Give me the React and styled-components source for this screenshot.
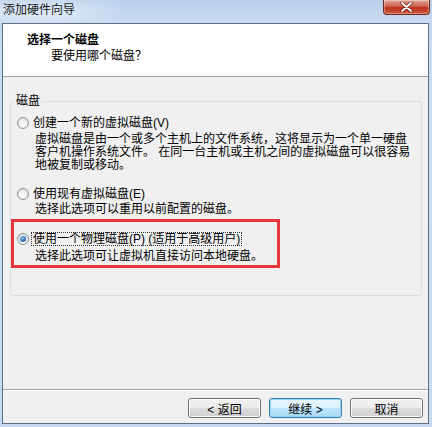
import React from "react";
import styled, { createGlobalStyle } from "styled-components";

const GlobalStyle = createGlobalStyle`
  body {
    margin: 0;
    background: #c8daef;
    font-family: "Liberation Sans", "Noto Sans CJK SC", sans-serif;
    font-size: 12px;
    color: #000;
  }
`;

const Window = styled.div`
  width: 432px;
  height: 427px;
  display: flex;
  flex-direction: column;
  background: linear-gradient(#bfd4ee, #cbdcf1 60px, #c6d9ef);
  overflow: hidden;
`;

const TitleBar = styled.div`
  height: 23px;
  display: flex;
  align-items: flex-start;
  padding-left: 3px;
  background: radial-gradient(ellipse 90px 18px at 40px 11px, rgba(255, 255, 255, 0.55), transparent),
    linear-gradient(#b9d0ec, #c9dbf1);
`;

const TitleText = styled.span`
  line-height: 21px;
  font-size: 12px;
  color: #1a1a1a;
`;

const CloseButton = styled.div`
  margin-left: auto;
  margin-right: 2px;
  width: 47px;
  height: 15px;
  box-sizing: border-box;
  border: 1px solid #6b2a22;
  border-top: none;
  border-radius: 0 0 4px 4px;
  background: linear-gradient(#e2a597, #cf5f4d 45%, #b9321f 55%, #d0583f);
  display: flex;
  align-items: center;
  justify-content: center;
  box-shadow: inset 0 0 0 1px rgba(255, 255, 255, 0.35);
`;

const ClientFrame = styled.div`
  flex: 1;
  margin: 0 3px 3px 2px;
  border: 1px solid #5e7089;
  background: #f0f0f0;
  display: flex;
  flex-direction: column;
`;

const Header = styled.div`
  height: 53px;
  box-sizing: border-box;
  background: #fff;
  border-bottom: 1px solid #a0a0a0;
  padding: 9px 0 0 24px;
`;

const HeaderTitle = styled.div`
  font-weight: bold;
  line-height: 14px;
`;

const HeaderSub = styled.div`
  font-family: "Noto Sans CJK SC", sans-serif;
  line-height: 14px;
  margin-left: 24px;
  margin-top: 1px;
`;

const Body = styled.div`
  flex: 1;
  padding-top: 18px;
`;

const Group = styled.fieldset`
  margin: 0 6px 0 7px;
  padding: 0 0 32px 6px;
  border: 1px solid #d5dfe5;
  border-radius: 3px;
  min-width: 0;
`;

const GroupLabel = styled.legend`
  margin-left: -3px;
  padding: 0 2px;
  line-height: 12px;
`;

const Option = styled.div`
  position: relative;
  margin-top: ${(p) => p.$top}px;

  ${(p) =>
    p.$marked &&
    `
    &::after {
      content: "";
      position: absolute;
      top: -13px;
      left: -6px;
      bottom: -5px;
      width: 269px;
      box-sizing: border-box;
      border: 3px solid #e4383c;
      pointer-events: none;
    }
  `}
`;

const OptionRow = styled.div`
  display: flex;
  align-items: center;
  height: 14px;
`;

const Radio = styled.span`
  width: 12px;
  height: 12px;
  box-sizing: border-box;
  border-radius: 50%;
  border: 1px solid #8d9499;
  background: radial-gradient(circle at 50% 60%, #f6f6f6 30%, #d9dbdd 80%);
  margin-right: 4px;
  display: flex;
  align-items: center;
  justify-content: center;
  flex-shrink: 0;
`;

const RadioDot = styled.span`
  width: 6px;
  height: 6px;
  border-radius: 50%;
  background: radial-gradient(circle at 40% 35%, #8fc7f3, #1f5f9e 70%);
`;

const OptionLabel = styled.span`
  line-height: 12px;
  padding: 0 1px;
  border: 1px dotted ${(p) => (p.$focused ? "#333" : "transparent")};
  margin-left: -2px;
  white-space: nowrap;
`;

const Description = styled.div`
  margin-left: 18px;
  margin-top: ${(p) => p.$gap}px;
  line-height: 13px;
  white-space: nowrap;
`;

const Footer = styled.div`
  border-top: 1px solid #a0a0a0;
  box-shadow: inset 0 1px 0 #fff;
  display: flex;
  justify-content: flex-end;
  gap: 8px;
  padding: 8px 5px 5px 0;
`;

const Button = styled.button`
  width: 73px;
  height: 20px;
  box-sizing: border-box;
  padding: 0;
  font-family: inherit;
  font-size: 12px;
  color: #000;
  border-radius: 3px;
  border: 1px solid ${(p) => (p.$primary ? "#3c7fb1" : "#707070")};
  background: ${(p) =>
    p.$primary
      ? "linear-gradient(#eaf6fd, #d9f0fc 50%, #bee6fd 50%, #a7d9f5)"
      : "linear-gradient(#f2f2f2, #ebebeb 50%, #dddddd 50%, #cfcfcf)"};
  box-shadow: inset 0 0 0 1px ${(p) => (p.$primary ? "#94d4f7" : "#fcfcfc")};
`;

const options = [
  {
    label: "创建一个新的虚拟磁盘(V)",
    top: 9,
    gap: 3,
    lines: [
      "虚拟磁盘是由一个或多个主机上的文件系统，这将显示为一个单一硬盘",
      "客户机操作系统文件。 在同一台主机或主机之间的虚拟磁盘可以很容易",
      "地被复制或移动。",
    ],
  },
  {
    label: "使用现有虚拟磁盘(E)",
    top: 15,
    gap: 2,
    lines: ["选择此选项可以重用以前配置的磁盘。"],
  },
  {
    label: "使用一个物理磁盘(P) (适用于高级用户)",
    top: 16,
    gap: 4,
    checked: true,
    lines: ["选择此选项可让虚拟机直接访问本地硬盘。"],
  },
];

export default function App() {
  return (
    <>
      <GlobalStyle />
      <Window>
        <TitleBar>
          <TitleText>添加硬件向导</TitleText>
          <CloseButton>
            <svg width="13" height="10" viewBox="0 0 13 10">
              <path
                d="M2 1 L11 9 M11 1 L2 9"
                stroke="#5a1a12"
                strokeWidth="3.2"
                strokeLinecap="round"
              />
              <path
                d="M2 1 L11 9 M11 1 L2 9"
                stroke="#fff"
                strokeWidth="1.8"
                strokeLinecap="round"
              />
            </svg>
          </CloseButton>
        </TitleBar>
        <ClientFrame>
          <Header>
            <HeaderTitle>选择一个磁盘</HeaderTitle>
            <HeaderSub>要使用哪个磁盘？</HeaderSub>
          </Header>
          <Body>
            <Group>
              <GroupLabel>磁盘</GroupLabel>
              {options.map((o) => (
                <Option key={o.label} $top={o.top} $marked={o.checked}>
                  <OptionRow>
                    <Radio>{o.checked && <RadioDot />}</Radio>
                    <OptionLabel $focused={o.checked}>{o.label}</OptionLabel>
                  </OptionRow>
                  <Description $gap={o.gap}>
                    {o.lines.map((line) => (
                      <div key={line}>{line}</div>
                    ))}
                  </Description>
                </Option>
              ))}
            </Group>
          </Body>
          <Footer>
            <Button>&lt; 返回</Button>
            <Button $primary>继续 &gt;</Button>
            <Button>取消</Button>
          </Footer>
        </ClientFrame>
      </Window>
    </>
  );
}
